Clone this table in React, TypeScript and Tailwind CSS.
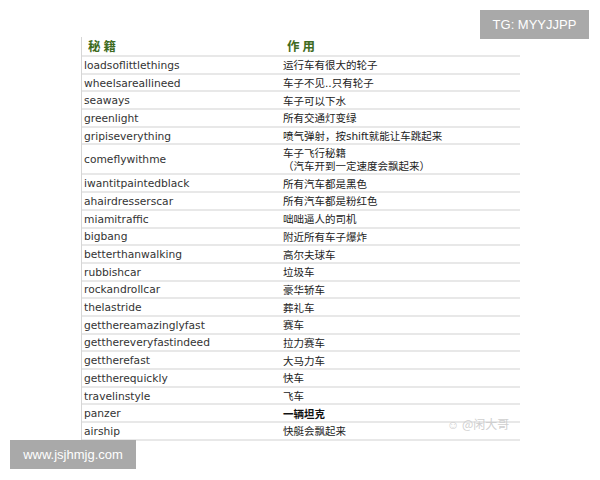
const rows: [string, string, boolean?][] = [
  ["loadsoflittlethings", "运行车有很大的轮子"],
  ["wheelsareallineed", "车子不见..只有轮子"],
  ["seaways", "车子可以下水"],
  ["greenlight", "所有交通灯变绿"],
  ["gripiseverything", "喷气弹射，按shift就能让车跳起来"],
  ["comeflywithme", "车子飞行秘籍\n（汽车开到一定速度会飘起来）"],
  ["iwantitpaintedblack", "所有汽车都是黑色"],
  ["ahairdresserscar", "所有汽车都是粉红色"],
  ["miamitraffic", "咄咄逼人的司机"],
  ["bigbang", "附近所有车子爆炸"],
  ["betterthanwalking", "高尔夫球车"],
  ["rubbishcar", "垃圾车"],
  ["rockandrollcar", "豪华轿车"],
  ["thelastride", "葬礼车"],
  ["getthereamazinglyfast", "赛车"],
  ["getthereveryfastindeed", "拉力赛车"],
  ["getttherefast".replace("ttt", "tt"), "大马力车"],
  ["gettherequickly", "快车"],
  ["travelinstyle", "飞车"],
  ["panzer", "一辆坦克", true],
  ["airship", "快艇会飘起来"],
];

const cjk = "font-['DejaVu_Sans','Noto_Sans_CJK_SC',sans-serif]";

export default function App() {
  return (
    <div className="relative w-[600px] h-[480px] bg-white overflow-hidden">
      <div className="pl-[81px] pt-[37px]">
        <div className="w-[439px] border-l border-[#d6d6d6]">
          <div className="flex h-[20px] items-center border-b-2 border-[#e8e8e8] font-['Noto_Sans_CJK_SC',serif] text-[12.5px] font-bold text-[#3f6b21]">
            <div className="w-[199px] pl-[6px] tracking-[3px]">秘籍</div>
            <div className="pl-[6px] tracking-[3px]">作用</div>
          </div>
          {rows.map(([code, desc, bold]) => (
            <div
              key={code}
              className={`flex items-center border-b-2 border-[#e8e8e8] pt-[2px] ${
                code === "comeflywithme" ? "h-[30px]" : "h-[17.7px]"
              }`}
            >
              <div className="w-[199px] pl-[2px] font-['DejaVu_Sans',sans-serif] text-[10.7px] text-[#333]">
                {code}
              </div>
              <div
                className={`pl-[2px] ${cjk} whitespace-pre-line text-[10.5px] leading-[13px] ${
                  bold ? "font-bold text-[#111]" : "text-[#222]"
                }`}
              >
                {desc}
              </div>
            </div>
          ))}
        </div>
      </div>

      <div className="absolute left-[447px] top-[415px] font-['Noto_Sans_CJK_SC',sans-serif] text-[12px] text-[#cfcfcf]">
        ☺ @闲大哥
      </div>

      <div className="absolute left-[480px] top-[10px] flex h-[29px] w-[109px] items-center justify-center bg-[#a9a9a9] font-['Liberation_Sans',sans-serif] text-[13px] text-white">
        TG: MYYJJPP
      </div>
      <div className="absolute left-[10px] top-[440px] flex h-[29px] w-[126px] items-center justify-center bg-[#a9a9a9] font-['Liberation_Sans',sans-serif] text-[13px] text-white">
        www.jsjhmjg.com
      </div>
    </div>
  );
}
